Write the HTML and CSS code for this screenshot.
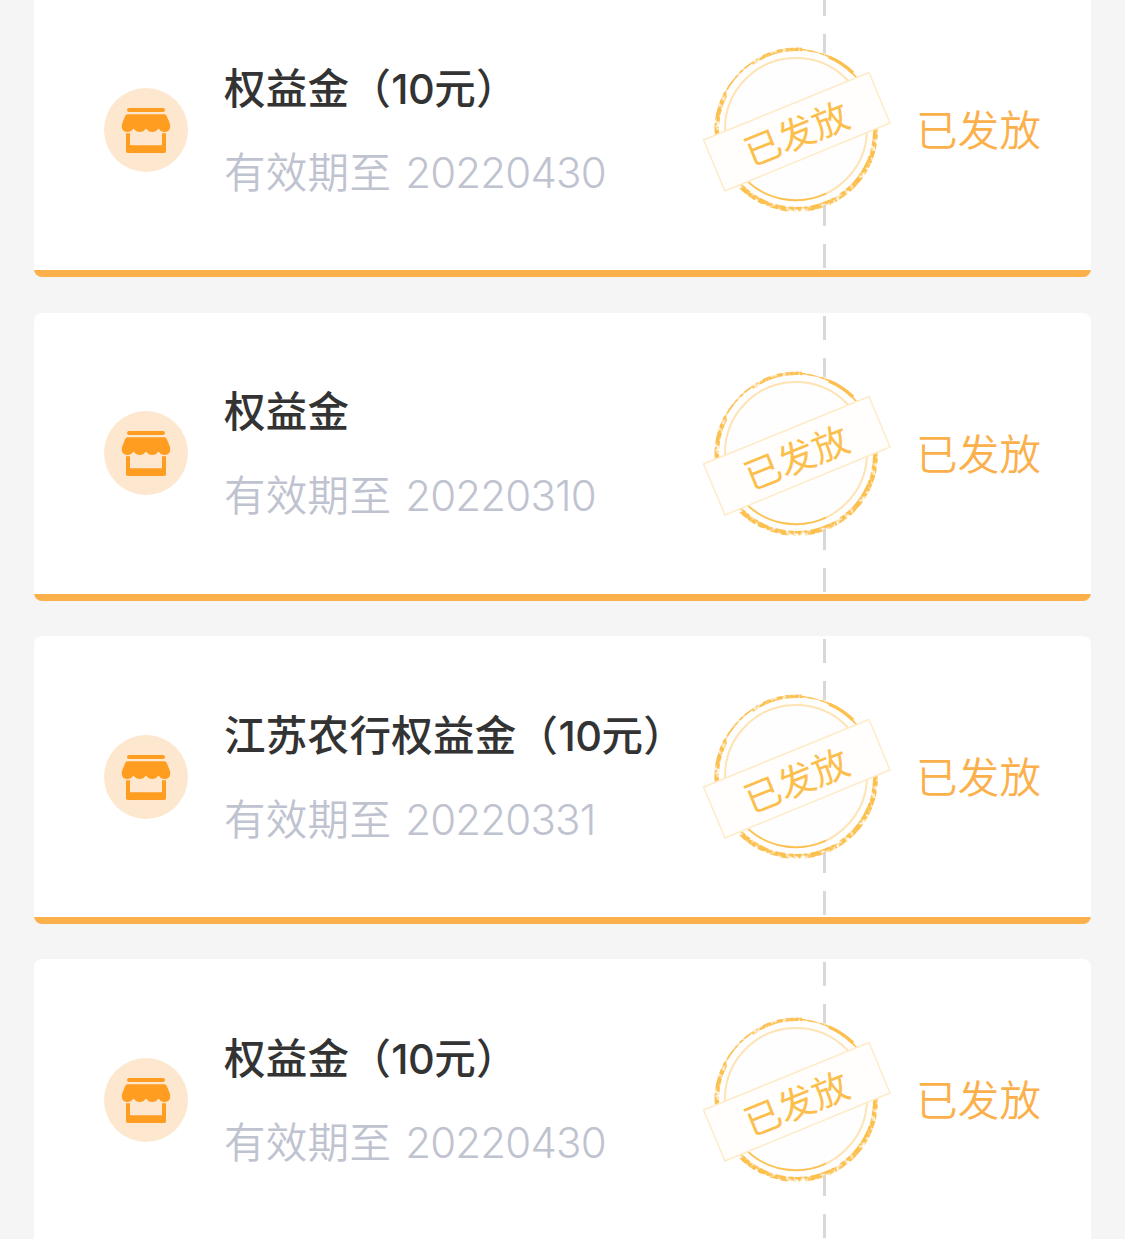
FILE: index.html
```html
<!DOCTYPE html>
<html lang="zh-CN">
<head>
    <meta charset="UTF-8">
    <title>权益金</title>
    <link rel="stylesheet" href="styles.css">
</head>
<body>
    <!-- shared shapes -->
    <svg class="defs" width="0" height="0">
        <defs>
            <filter id="rough" x="0" y="0" width="200" height="200" filterUnits="userSpaceOnUse">
                <feTurbulence type="fractalNoise" baseFrequency="0.2" numOctaves="3" seed="11" result="noise"/>
                <feColorMatrix in="noise" type="matrix" values="0 0 0 0 0  0 0 0 0 0  0 0 0 0 0  4 0 0 0 -1.1" result="holes"/>
                <feComposite in="SourceGraphic" in2="holes" operator="in"/>
                <feGaussianBlur stdDeviation="0.5"/>
            </filter>
        </defs>
        <symbol id="shop" viewBox="0 0 84 84">
            <circle cx="42" cy="42" r="42" fill="#fee7cf"/>
            <g fill="#fe9d20">
                <rect x="23" y="20" width="38" height="4" rx="2"/>
                <path d="M23.500 26.300h37q1.700 0 2.200 1.500l3.400 8.500q1 7.700-5.600 7.700q-3.500 0-6-3.500q-2.500 3.500-6.200 3.500t-6.300-3.500q-2.500 3.500-6.200 3.500t-6.300-3.500q-2.500 3.500-6 3.500q-6.600 0-5.600-7.700l3.400-8.500q.5-1.500 2.200-1.500z"/>
                <path d="M22 45.300h4v12h32v-12h4v18q0 1.700-1.700 1.700H23.700q-1.700 0-1.700-1.700z"/>
            </g>
        </symbol>
        <symbol id="stamp" viewBox="0 0 200 200">
            <circle cx="100" cy="100" r="81" fill="#fefefe"/>
            <g fill="none" stroke="#fcc050">
                <circle cx="100" cy="100" r="79.500" stroke-width="1.500" stroke="#fee9c6"/>
                <g filter="url(#rough)">
                    <circle cx="100" cy="100" r="79.500" stroke-width="1.700"/>
                    <path d="M21 109A79 79 0 0 1 30 64" stroke-width="4.500"/>
                    <path d="M56 34.500A79.500 79.500 0 0 1 106 20.500" stroke-width="3.500"/>
                    <path d="M179 92A79 79 0 0 1 43 155.500" stroke-width="5"/>
                </g>
                <path d="M133 28A79.500 79.500 0 0 1 157 44" stroke-width="3.500"/>
                <circle cx="100" cy="100" r="71" stroke-width="2" stroke="#fee3b4"/>
                <path d="M130 164.500A71 71 0 0 1 49 150" stroke-width="1.700"/>
            </g>
            <path d="M7.500 111L173 43.500L194 94L29 162Z" fill="#fffefd" stroke="#feebc8" stroke-width="1.500"/>
        </symbol>
    </svg>

    <div class="list">
        <div class="card">
            <svg class="icon"><use href="#shop"/></svg>
            <div class="info">
                <div class="title">权益金（<span class="num">10</span>元）</div>
                <div class="date">有效期至 <span class="num">20220430</span></div>
            </div>
            <div class="status">已发放</div>
            <svg class="stamp" viewBox="0 0 200 200">
                <use href="#stamp"/>
                <text x="100" y="118" text-anchor="middle" transform="rotate(-22 101 103)">已发放</text>
            </svg>
        </div>

        <div class="card">
            <svg class="icon"><use href="#shop"/></svg>
            <div class="info">
                <div class="title">权益金</div>
                <div class="date">有效期至 <span class="num">20220310</span></div>
            </div>
            <div class="status">已发放</div>
            <svg class="stamp" viewBox="0 0 200 200">
                <use href="#stamp"/>
                <text x="100" y="118" text-anchor="middle" transform="rotate(-22 101 103)">已发放</text>
            </svg>
        </div>

        <div class="card">
            <svg class="icon"><use href="#shop"/></svg>
            <div class="info">
                <div class="title">江苏农行权益金（<span class="num">10</span>元）</div>
                <div class="date">有效期至 <span class="num">20220331</span></div>
            </div>
            <div class="status">已发放</div>
            <svg class="stamp" viewBox="0 0 200 200">
                <use href="#stamp"/>
                <text x="100" y="118" text-anchor="middle" transform="rotate(-22 101 103)">已发放</text>
            </svg>
        </div>

        <div class="card">
            <svg class="icon"><use href="#shop"/></svg>
            <div class="info">
                <div class="title">权益金（<span class="num">10</span>元）</div>
                <div class="date">有效期至 <span class="num">20220430</span></div>
            </div>
            <div class="status">已发放</div>
            <svg class="stamp" viewBox="0 0 200 200">
                <use href="#stamp"/>
                <text x="100" y="118" text-anchor="middle" transform="rotate(-22 101 103)">已发放</text>
            </svg>
        </div>
    </div>
</body>
</html>
```

FILE: styles.css
```css
* {
    box-sizing: border-box;
}

body {
    margin: 0;
    height: 1239px;
    overflow: hidden;
    background: #f5f5f5;
    font-family: Inter, "Noto Sans CJK SC", sans-serif;
    font-size: 41.5px;
    line-height: 60px;
    letter-spacing: 0.3px;
}

.defs {
    position: absolute;
}

.list {
    display: flex;
    flex-direction: column;
    gap: 35.3px;
    margin-top: -10.6px;
    padding: 0 34px;
}

.card {
    position: relative;
    display: flex;
    flex-shrink: 0;
    align-items: center;
    height: 288px;
    padding: 0 0 7px 70px;
    border-radius: 8px;
    overflow: hidden;
    background: linear-gradient(#fbb04c, #fbb04c) bottom / 100% 7px no-repeat #fff;
}

.icon {
    flex-shrink: 0;
    width: 84px;
    height: 84px;
    margin-right: 36px;
}

.info {
    flex: 1;
    display: flex;
    flex-direction: column;
    gap: 24px;
    padding-top: 2px;
    white-space: nowrap;
}

.title {
    color: #333;
    font-weight: 500;
}

.title .num {
    letter-spacing: -0.5px;
}

.date {
    color: #bfc3d0;
    font-weight: 350;
}

.date .num {
    margin-left: 2px;
    font-size: 42px;
    font-weight: 300;
    letter-spacing: -0.8px;
}

.status {
    display: flex;
    align-items: center;
    align-self: stretch;
    width: 268px;
    padding: 3px 0 0 93px;
    color: #fbb04c;
    font-weight: 350;
    /* ticket tear line */
    background: repeating-linear-gradient(#d8d8d8 0 24px, transparent 24px 42px) 0 3px / 3px 100% no-repeat;
}

.stamp {
    position: absolute;
    top: 40px;
    left: 662px;
    width: 200px;
    height: 200px;
}

.stamp text {
    fill: #fcbe4c;
    font-size: 36.5px;
    font-weight: 400;
    letter-spacing: 0;
}
```
